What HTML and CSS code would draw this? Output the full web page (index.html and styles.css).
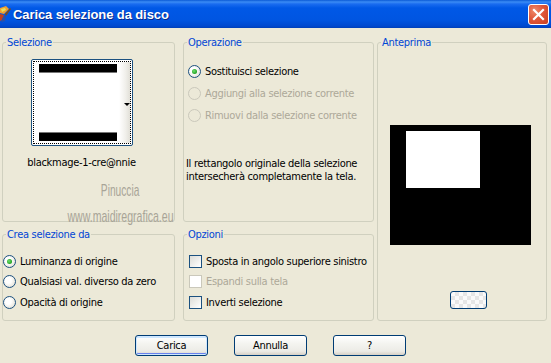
FILE: index.html
```html
<!DOCTYPE html>
<html lang="it">
<head>
<meta charset="utf-8">
<title>Carica selezione da disco</title>
<link rel="stylesheet" href="styles.css">
</head>
<body>
<div class="window">
  <div class="titlebar">
    <svg class="appicon" width="11" height="18" viewBox="0 0 11 18">
      <path d="M0 3 L6 1 L9 4 L4 9 L0 8 Z" fill="#f0a030"/>
      <path d="M1 4 L5 3 L6 5 L2 7 Z" fill="#e8e060"/>
      <path d="M0 9 L4 10 L2 15 L0 16 Z" fill="#c04020"/>
      <path d="M5 9 L10 3 L11 4 L6 11 Z" fill="#7a4a1c"/>
      <path d="M3 12 L6 11 L5 16 L1 17 Z" fill="#3050a0"/>
    </svg>
    <span class="title">Carica selezione da disco</span>
    <button class="close" aria-label="Chiudi">
      <svg width="13" height="13" viewBox="0 0 13 13"><path d="M2 2 L11 11 M11 2 L2 11" stroke="#fff" stroke-width="2.2" stroke-linecap="square"/></svg>
    </button>
  </div>

  <div class="content">
    <fieldset class="group sel">
      <legend>Selezione</legend>
      <div class="thumb">
        <div class="focus">
          <div class="thumbimg">
            <div class="bar"></div>
            <div class="bar bottom"></div>
          </div>
          <div class="strip"><span class="arrow"></span></div>
        </div>
      </div>
      <div class="filename">blackmage-1-cre@nnie</div>
      <div class="watermark">
        <div class="wm1">Pinuccia</div>
        <div class="wm2">www.maidiregrafica.eu</div>
      </div>
    </fieldset>

    <fieldset class="group op">
      <legend>Operazione</legend>
      <div class="opts">
        <label class="row"><span class="radio on"></span>Sostituisci selezione</label>
        <label class="row disabled"><span class="radio"></span>Aggiungi alla selezione corrente</label>
        <label class="row disabled"><span class="radio"></span>Rimuovi dalla selezione corrente</label>
      </div>
      <p class="desc">Il rettangolo originale della selezione<br>intersecherà completamente la tela.</p>
    </fieldset>

    <fieldset class="group preview">
      <legend>Anteprima</legend>
      <div class="canvas"><div class="sel-rect"></div></div>
      <button class="checker" aria-label="Sfondo"></button>
    </fieldset>

    <fieldset class="group crea">
      <legend>Crea selezione da</legend>
      <div class="opts tight">
        <label class="row"><span class="radio on"></span>Luminanza di origine</label>
        <label class="row"><span class="radio"></span>Qualsiasi val. diverso da zero</label>
        <label class="row"><span class="radio"></span>Opacità di origine</label>
      </div>
    </fieldset>

    <fieldset class="group opz">
      <legend>Opzioni</legend>
      <div class="opts tight">
        <label class="row"><span class="check"></span>Sposta in angolo superiore sinistro</label>
        <label class="row disabled"><span class="check"></span>Espandi sulla tela</label>
        <label class="row"><span class="check"></span>Inverti selezione</label>
      </div>
    </fieldset>
  </div>

  <div class="buttons">
    <button class="btn default">Carica</button>
    <button class="btn">Annulla</button>
    <button class="btn">?</button>
  </div>
</div>
</body>
</html>
```

FILE: styles.css
```css
html, body {
  margin: 0;
  padding: 0;
  height: 100%;
}
body {
  background: #ece9d8;
  color: #000;
  font-family: "DejaVu Sans", sans-serif;
  font-stretch: condensed;
  font-size: 11px;
  letter-spacing: -0.3px;
  overflow: hidden;
}

.window {
  width: 551px;
  height: 363px;
}

/* title bar */
.titlebar {
  height: 28px;
  display: flex;
  align-items: center;
  background: linear-gradient(#0a5ad6 0, #3b8cf5 2px, #1a6cf0 4px, #0058e6 8px, #0055e1 20px, #0049cf 26px, #0040b8 28px);
}
.appicon {
  display: block;
}
.title {
  margin-left: 2px;
  color: #fff;
  font-family: "Liberation Sans", Arial, sans-serif;
  font-stretch: normal;
  font-weight: bold;
  font-size: 13px;
  letter-spacing: -0.1px;
  text-shadow: 1px 1px 0 #0a2a8a;
}
.close {
  margin-left: auto;
  margin-right: 2px;
  width: 21px;
  height: 21px;
  padding: 0;
  border: 1px solid #fff;
  border-radius: 3px;
  background: radial-gradient(circle at 30% 30%, #ee8a6a 0, #e0573a 45%, #c8401f 100%);
  display: flex;
  align-items: center;
  justify-content: center;
}
.close svg {
  display: block;
}

/* group boxes */
.content {
  display: grid;
  grid-template-columns: 173px 191px 168px;
  grid-template-rows: 186px 93px;
  column-gap: 8px;
  row-gap: 6px;
  padding: 8px 0 0 2px;
}
.group {
  margin: 0;
  padding: 0;
  min-width: 0;
  border: 1px solid #d0d0bf;
  border-radius: 3px;
}
.group legend {
  margin-left: 3px;
  padding: 0 1px;
  color: #0046d5;
  line-height: 13px;
}
.preview {
  grid-column: 3;
  grid-row: 1 / span 2;
  margin-left: -5px;
  width: 168px;
}

/* Selezione */
.sel {
  display: flex;
  flex-direction: column;
  align-items: center;
  padding-right: 14px;
}
.thumb {
  margin-top: 10px;
  width: 98px;
  height: 83px;
  border: 1px solid #1c5180;
  border-radius: 2px;
  background: #fff;
  padding: 1px;
}
.focus {
  height: 81px;
  border: 1px dotted #000;
  display: flex;
}
.thumbimg {
  flex: 1;
  display: flex;
  flex-direction: column;
  justify-content: space-between;
  padding: 2px 0 2px 5px;
}
.bar {
  width: 78px;
  height: 8px;
  background: #000;
  border-bottom: 1px solid #777;
}
.bar.bottom {
  border-bottom: 0;
  border-top: 1px solid #777;
}
.strip {
  width: 11px;
  background: linear-gradient(90deg, #fff, #f0efea 60%, #e2e0d8);
  display: flex;
  align-items: center;
  justify-content: flex-end;
}
.arrow {
  width: 0;
  height: 0;
  border-left: 3px solid transparent;
  border-right: 3px solid transparent;
  border-top: 3px solid #000;
  margin-top: 4px;
}
.filename {
  margin-top: 10px;
  line-height: 13px;
  white-space: nowrap;
}
.watermark {
  align-self: flex-end;
  margin-right: -14px;
  width: 108px;
  display: flex;
  flex-direction: column;
  align-items: center;
  color: #a8a497;
  font-family: "Liberation Sans", Arial, sans-serif;
  font-stretch: normal;
  letter-spacing: 0;
  white-space: nowrap;
}
.wm1 {
  margin-top: 12px;
  font-size: 17px;
  line-height: 20px;
  transform: scaleX(0.6);
}
.wm2 {
  margin-top: 6px;
  font-size: 17px;
  line-height: 20px;
  transform: scaleX(0.62);
}

/* radio / check rows */
.opts {
  display: flex;
  flex-direction: column;
}
.op .opts {
  margin-top: 11px;
  padding-left: 4px;
}
.row {
  display: flex;
  align-items: center;
  height: 22px;
  gap: 4px;
  white-space: nowrap;
}
.tight {
  margin-top: 10px;
}
.tight .row {
  height: 20.5px;
}
.opz .opts {
  padding-left: 5px;
}
.row.disabled {
  color: #aca899;
}
.radio {
  width: 11px;
  height: 11px;
  border: 1px solid #1c5180;
  border-radius: 50%;
  background: radial-gradient(circle at 40% 40%, #fff 30%, #e4e2d8 80%, #d6d3c6);
  display: flex;
  align-items: center;
  justify-content: center;
  flex: none;
}
.radio.on::after {
  content: "";
  width: 5px;
  height: 5px;
  border-radius: 50%;
  background: radial-gradient(circle at 40% 40%, #6fe06f, #21a121 70%);
}
.disabled .radio {
  border-color: #cac8bb;
  background: #ece9d8;
}
.check {
  width: 11px;
  height: 11px;
  border: 1px solid #1c5180;
  background: linear-gradient(135deg, #dcdcd7, #fff);
  flex: none;
}
.disabled .check {
  border-color: #cac8bb;
  background: #fff;
}
.desc {
  margin: 32px 0 0 2px;
  line-height: 12.5px;
}

/* Anteprima */
.canvas {
  margin: 76px 0 0 12px;
  width: 141px;
  height: 120px;
  background: #000;
  padding: 6px 0 0 16px;
  box-sizing: border-box;
}
.sel-rect {
  width: 74px;
  height: 57px;
  background: #fff;
}
.checker {
  display: block;
  margin: 46px 0 0 72px;
  width: 37px;
  height: 18px;
  padding: 0;
  border: 1px solid #003c74;
  border-radius: 3px;
  background: conic-gradient(#e6e6e6 25%, #fafafa 0 50%, #e6e6e6 0 75%, #fafafa 0) 0 0 / 8px 8px;
}

/* bottom buttons */
.buttons {
  display: flex;
  gap: 26px;
  padding: 14px 0 0 135px;
}
.btn {
  width: 73px;
  height: 21px;
  padding: 0;
  border: 1px solid #003c74;
  border-radius: 3px;
  background: linear-gradient(#ffffff 0, #f4f4f0 40%, #ecebe6 80%, #d6d0c5 100%);
  font-family: "DejaVu Sans", sans-serif;
  font-stretch: condensed;
  font-size: 11px;
  letter-spacing: -0.3px;
  color: #000;
}
.btn.default {
  box-shadow: inset 0 0 0 1px #cee7ff, inset 0 -2px 0 #6982ee, inset 0 2px 0 #cee7ff;
}
```
